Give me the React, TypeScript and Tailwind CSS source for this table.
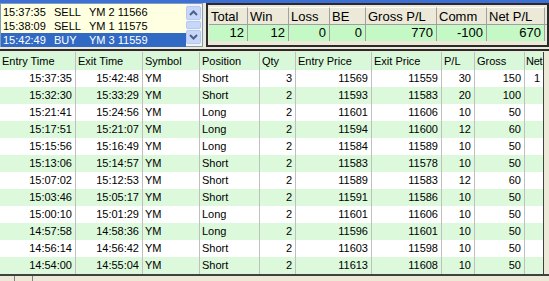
import React from "react";

const orders = [
  { time: "15:37:35", side: "SELL", desc: "YM 2 11566" },
  { time: "15:38:09", side: "SELL", desc: "YM 1 11575" },
  { time: "15:42:49", side: "BUY", desc: "YM 3 11559" },
];

const summary = [
  { label: "Total", value: "12", w: "w-[39px]" },
  { label: "Win", value: "12", w: "w-[41px]" },
  { label: "Loss", value: "0", w: "w-[41px]" },
  { label: "BE", value: "0", w: "w-[36px]" },
  { label: "Gross P/L", value: "770", w: "w-[71px]" },
  { label: "Comm", value: "-100", w: "w-[50px]" },
  { label: "Net P/L", value: "670", w: "w-[58px]" },
];

// [entry, exit, position, qty, entryPx, exitPx, pl, gross]
const trades: [string, string, string, number, number, number, number, number][] = [
  ["15:37:35", "15:42:48", "Short", 3, 11569, 11559, 30, 150],
  ["15:32:30", "15:33:29", "Short", 2, 11593, 11583, 20, 100],
  ["15:21:41", "15:24:56", "Long", 2, 11601, 11606, 10, 50],
  ["15:17:51", "15:21:07", "Long", 2, 11594, 11600, 12, 60],
  ["15:15:56", "15:16:49", "Long", 2, 11584, 11589, 10, 50],
  ["15:13:06", "15:14:57", "Short", 2, 11583, 11578, 10, 50],
  ["15:07:02", "15:12:53", "Short", 2, 11589, 11583, 12, 60],
  ["15:03:46", "15:05:17", "Short", 2, 11591, 11586, 10, 50],
  ["15:00:10", "15:01:29", "Long", 2, 11601, 11606, 10, 50],
  ["14:57:58", "14:58:36", "Long", 2, 11596, 11601, 10, 50],
  ["14:56:14", "14:56:42", "Short", 2, 11603, 11598, 10, 50],
  ["14:54:00", "14:55:04", "Short", 2, 11613, 11608, 10, 50],
];

const columns = [
  { label: "Entry Time", w: "w-[76px]", right: true },
  { label: "Exit Time", w: "w-[67px]", right: true },
  { label: "Symbol", w: "w-[57px]", right: false },
  { label: "Position", w: "w-[60px]", right: false },
  { label: "Qty", w: "w-[36px]", right: true },
  { label: "Entry Price", w: "w-[76px]", right: true },
  { label: "Exit Price", w: "w-[70px]", right: true },
  { label: "P/L", w: "w-[33px]", right: true },
  { label: "Gross", w: "w-[50px]", right: true },
];

function ScrollButton({ up }: { up: boolean }) {
  return (
    <div className="h-[14px] w-full rounded-[2px] border border-[#b5c8f0] bg-[#c6d7fb] flex items-center justify-center">
      <svg width="9" height="6" viewBox="0 0 9 6">
        <path
          d={up ? "M1 5 L4.5 1.5 L8 5" : "M1 1 L4.5 4.5 L8 1"}
          fill="none"
          stroke="#4d6185"
          strokeWidth="2"
        />
      </svg>
    </div>
  );
}

export default function App() {
  return (
    <div
      className="w-[549px] h-[281px] overflow-hidden bg-[#ece9d8] text-black"
      style={{ fontFamily: '"Liberation Sans", Arial, sans-serif' }}
    >
      {/* title bar edge */}
      <div className="h-[3px] bg-[#3d6fd4]" />

      {/* TOP SECTION */}
      <div className="flex h-[44px] gap-[3px]">
        {/* order list */}
        <div className="w-[203px] flex border border-[#7f9db9] bg-[#ffffe1]">
          <div className="flex-1 pt-[1px] text-[11px]">
            {orders.map((o, i) => (
              <div
                key={o.time}
                className={`flex h-[14px] items-center pl-[2px] ${
                  i === 2 ? "bg-[#316ac5] text-white" : ""
                }`}
              >
                <span className="w-[51px]">{o.time}</span>
                <span className="w-[35px]">{o.side}</span>
                <span>{o.desc}</span>
              </div>
            ))}
          </div>
          <div className="w-[16px] flex flex-col justify-between bg-[#f4f3ee] py-[2px] pr-[1px]">
            <ScrollButton up />
            <div className="h-[8px] w-full rounded-[2px] border border-[#b5c8f0] bg-[#c6d7fb]" />
            <ScrollButton up={false} />
          </div>
        </div>

        {/* summary panel */}
        <div className="flex-1 border-2 border-[#2a2a2a] bg-[#ece9d8] pt-[2px] pl-[1px] overflow-hidden">
          <div className="flex text-[13px]">
            {summary.map(s => (
              <div key={s.label} className={`${s.w} shrink-0`}>
                <div className="h-[18px] border-r border-b border-[#a0a0a0] pl-[2px] leading-[18px] border-t border-t-white">
                  {s.label}
                </div>
                <div className="h-[16px] border-r border-[#a0a0a0] bg-[#c4f8c4] pr-[3px] text-right leading-[16px]">
                  {s.value}
                </div>
              </div>
            ))}
            <div className="w-[20px] shrink-0">
              <div className="h-[18px] border-b border-[#a0a0a0]" />
              <div className="h-[16px] bg-[#ece9d8]" />
            </div>
          </div>
        </div>
      </div>

      {/* divider */}
      <div className="h-[2px]" />
      <div className="h-[2px] bg-[#2a2a2a]" />
      <div className="h-[1px]" />

      {/* TRADES TABLE */}
      <div className="flex">
        <div className="w-[544px] shrink-0 overflow-hidden border-r border-[#404040] bg-white text-[11px]">
          <div className="flex h-[18px] bg-[#d9f8d9]">
            {columns.map(c => (
              <div
                key={c.label}
                className={`${c.w} shrink-0 border-r border-[#c0c0c0] pl-[2px] leading-[18px]`}
              >
                {c.label}
              </div>
            ))}
            <div className="w-[18px] shrink-0 pl-[1px] leading-[18px] tracking-[-0.3px]">Net</div>
          </div>
          {trades.map((t, i) => {
            const [entry, exit, pos, qty, ePx, xPx, pl, gross] = t;
            const cells = [entry, exit, "YM", pos, qty, ePx, xPx, pl, gross];
            return (
              <div
                key={entry}
                className={`flex h-[17px] ${i % 2 === 1 ? "bg-[#dcf9dc]" : "bg-white"}`}
              >
                {cells.map((v, j) => (
                  <div
                    key={j}
                    className={`${columns[j].w} shrink-0 border-r border-[#c0c0c0] leading-[17px] ${
                      columns[j].right ? "text-right pr-[3px]" : "pl-[2px]"
                    }`}
                  >
                    {v}
                  </div>
                ))}
                <div className="w-[18px] shrink-0 text-right pr-[3px] leading-[17px]">
                  {i === 0 ? "1" : ""}
                </div>
              </div>
            );
          })}
        </div>
        <div className="flex-1" />
      </div>

      {/* bottom edge */}
      <div className="h-[2px] bg-[#404040]" />
      <div className="flex h-[6px] pl-[14px]">
        <div className="w-[19px] border-x border-[#808080]" />
      </div>
    </div>
  );
}
